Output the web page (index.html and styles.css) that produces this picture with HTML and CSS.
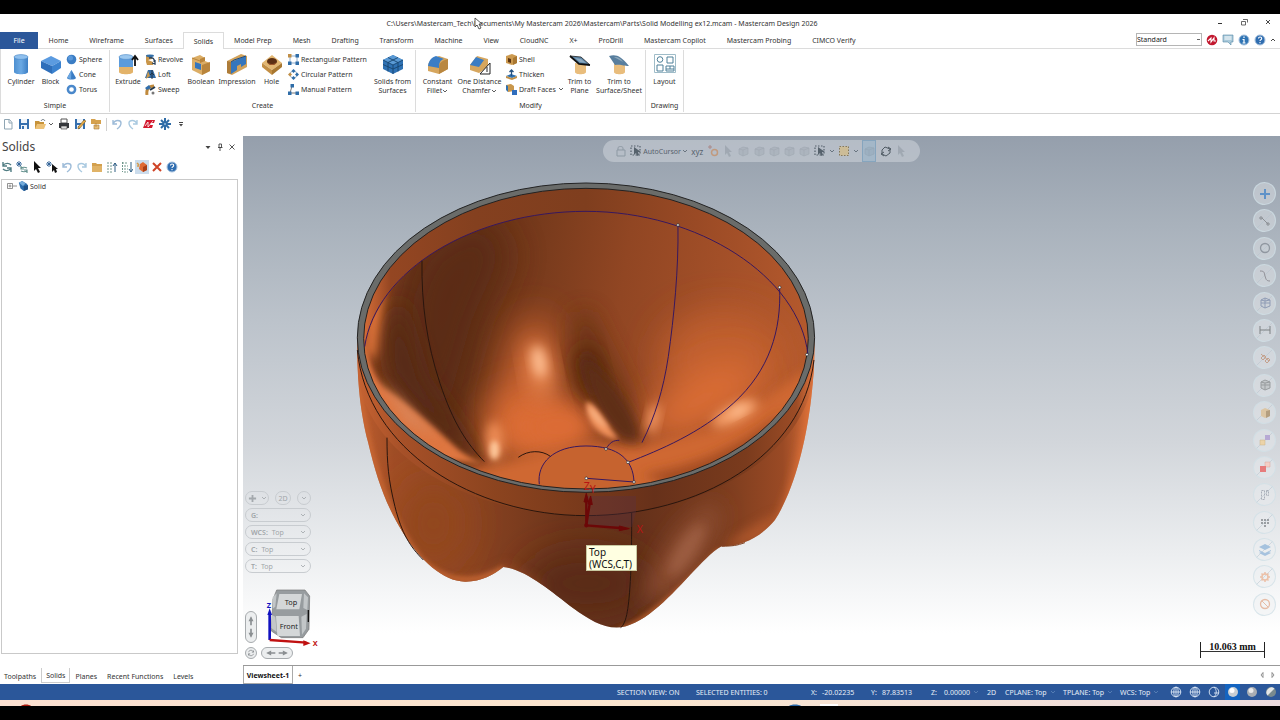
FILE: index.html
```html
<!DOCTYPE html>
<html lang="en">
<head>
<meta charset="utf-8">
<title>Mastercam Design 2026</title>
<link rel="stylesheet" href="styles.css">
</head>
<body>
<svg class="defs" width="0" height="0" aria-hidden="true">
  <defs>
    <linearGradient id="cylg"><stop offset="0" stop-color="#4d8fd0"/><stop offset=".5" stop-color="#6caae4"/><stop offset="1" stop-color="#3d7fc4"/></linearGradient>
  </defs>
  <symbol id="chev" viewBox="0 0 6 6"><path d="M1 2l2 2 2-2" fill="none" stroke="currentColor" stroke-width=".8"/></symbol>
  <symbol id="cylinder" viewBox="0 0 22 22"><path d="M4 4v15c0 3 14 3 14 0V4z" fill="url(#cylg)"/><ellipse cx="11" cy="4" rx="7" ry="2.4" fill="#8fc0ee" stroke="#4a86c5" stroke-width=".6"/></symbol>
  <symbol id="block" viewBox="0 0 22 22"><path d="M1 8l10-5 10 5-9 5z" fill="#5b9be0"/><path d="M1 8l11 5v8L1 15z" fill="#2f6fba"/><path d="M12 13l9-5v7l-9 6z" fill="#3b82cf"/></symbol>
  <symbol id="sphere" viewBox="0 0 11 11"><circle cx="5.500" cy="5.500" r="4.800" fill="#3b7dc4"/><circle cx="4.500" cy="4" r="2.500" fill="#5a98da"/></symbol>
  <symbol id="cone" viewBox="0 0 11 11"><path d="M5.500 1L10 9c-1 2-8 2-9 0z" fill="#3b7dc4"/><path d="M5.500 1L5 10 1 9z" fill="#6ba6e0"/></symbol>
  <symbol id="torus" viewBox="0 0 11 11"><circle cx="5.500" cy="5.500" r="3.600" fill="none" stroke="#4a88cb" stroke-width="2.500"/></symbol>
  <symbol id="extrude" viewBox="0 0 22 22"><path d="M2 13v6c0 3 14 3 14 0v-6z" fill="#e3b36a"/><path d="M2 4v10h14V4z" fill="#5b9bdc"/><ellipse cx="9" cy="4" rx="7" ry="2.400" fill="#9cc8ef" stroke="#4a86c5" stroke-width=".6"/><path d="M18 13V4M15 7l3-4 3 4" stroke="#111" stroke-width="1.800" fill="none"/></symbol>
  <symbol id="revolve" viewBox="0 0 11 11"><path d="M1 1h6v4L3 6l5 2v3H2L1 8z" fill="#c9964a"/><ellipse cx="5" cy="1.800" rx="4" ry="1.400" fill="#336fa8"/><path d="M4 4c4-1 6 1 5 4M7 9l3 1V6" stroke="#29415c" stroke-width="1.300" fill="none"/></symbol>
  <symbol id="loft" viewBox="0 0 11 11"><path d="M3 1h5l3 8H0z" fill="#326aa4"/><path d="M3 2l2 5-4 3z" fill="#c9984d"/><path d="M7 1v9M5 6l2-2 2 2" stroke="#203548" fill="none"/></symbol>
  <symbol id="sweep" viewBox="0 0 11 11"><path d="M2 11C1 5 4 2 9 2" fill="none" stroke="#c08a3d" stroke-width="3"/><path d="M5 6l5-3" stroke="#22374c" stroke-width="2"/><path d="M0 4l4-3 2 3-4 2z" fill="#316fae"/><circle cx="8" cy="9" r="1.500" fill="#777"/></symbol>
  <symbol id="boolean" viewBox="0 0 22 22"><path d="M2 5l8-3 5 3v3l5 2v8l-8 4-10-5z" fill="#dcae66"/><path d="M12 12l8-3v9l-8 4zM10 6l5-2v4l-5 2z" fill="#b9853c"/><path d="M5 9l6 2v6l-6-2z" fill="#3576bd"/><path d="M2 5l8 3" stroke="#b9853c"/></symbol>
  <symbol id="impression" viewBox="0 0 22 22"><path d="M1 8l14-7 6 2v11L6 22l-5-2z" fill="#d2a25a"/><path d="M5 9l15-6v8l-5 3v-3l-4 2v4l-6 4z" fill="#3576bd"/><path d="M5 9l3-2 12-4" stroke="#1f4d82" fill="none"/><path d="M1 8l4 1v12l-4-1z" fill="#ad7c39"/></symbol>
  <symbol id="hole" viewBox="0 0 22 22"><path d="M1 10l10-8 10 8-10 7z" fill="#e2b671"/><path d="M1 10l10 7v5L1 14z" fill="#c38f45"/><path d="M21 10l-10 7v5l10-8z" fill="#a87730"/><ellipse cx="11" cy="8.500" rx="5" ry="3.400" fill="#5b2f14"/><path d="M7 10c2 2 6 2 8 0" stroke="#a35a2d" fill="none"/></symbol>
  <symbol id="rectp" viewBox="0 0 11 11"><path d="M2 2h7v7H2z" fill="none" stroke="#8cabcb"/><g fill="#2f6da8"><path d="M0 0h3.500v3.500H0z" fill="#c18f47"/><path d="M7.500 0H11v3.500H7.500zM0 7.500h3.500V11H0zM7.500 7.500H11V11H7.500z"/></g></symbol>
  <symbol id="circp" viewBox="0 0 11 11"><circle cx="5.500" cy="5.500" r="3.500" fill="none" stroke="#9fb6cc"/><g fill="#2f6da8"><path d="M5.500 0l2 2-2 2-2-2zM5.500 7l2 2-2 2-2-2zM9 3.500l2 2-2 2-2-2z"/><path d="M2 3.500l2 2-2 2-2-2z" fill="#c18f47"/></g></symbol>
  <symbol id="manp" viewBox="0 0 11 11"><path d="M4 2L2 9h7" fill="none" stroke="#777"/><g fill="#2f6da8"><path d="M2.500 0H6v3.500H2.500zM7.500 7.500H11V11H7.500z"/><path d="M0 7.500h3.500V11H0z"/></g></symbol>
  <symbol id="solidsurf" viewBox="0 0 22 22"><path d="M1 7l10-5 10 5v9l-10 5-10-5z" fill="#2f72b4"/><path d="M1 7l10 5 10-5-10-5z" fill="#5a9ad5"/><path d="M1 7l10 5 10-5M11 12v9M1 11.500L11 16l10-4.500M6 4.500l10 5v9M16 4.500l-10 5v9" stroke="#17456f" fill="none" stroke-width=".9"/></symbol>
  <symbol id="fillet" viewBox="0 0 22 22"><path d="M1 13C2 6 7 5 12 3l9 3v10l-9 5-11-3z" fill="#d6a65e"/><path d="M1 13C2 6 6 4 9 3l8 3c-4 1-5 4-5 9z" fill="#3b7dc4"/><path d="M12 15c0-5 2-7 9-9v10l-9 5z" fill="#b98740"/></symbol>
  <symbol id="chamfer" viewBox="0 0 22 22"><path d="M1 12l7-9 11 3v8l-9 6-9-3z" fill="#d6a65e"/><path d="M1 12l6-8 8 3-5 7z" fill="#3b7dc4"/><path d="M11 21h10V10z" fill="#fff" stroke="#222"/><path d="M18 14v5" stroke="#222"/></symbol>
  <symbol id="shell" viewBox="0 0 11 11"><path d="M0 2l6-2 5 2v7l-5 2-6-2z" fill="#cc9a50"/><path d="M2 4l3 1v4l-3-1z" fill="#5b3412"/><path d="M7 4l4-2v7l-4 2z" fill="#a97731"/></symbol>
  <symbol id="thicken" viewBox="0 0 11 11"><path d="M0 7l5-2 6 2-5 2z" fill="#2f71b1"/><path d="M0 7v2l6 2 5-2V7L6 9z" fill="#c18f47"/><path d="M5.500 7V1M3.500 3l2-2 2 2" stroke="#225080" fill="none" stroke-width="1.300"/></symbol>
  <symbol id="draft" viewBox="0 0 11 11"><path d="M0 1l5-1 3 2v5l-6 1z" fill="#c9974c"/><path d="M0 1l2 1v6L0 6z" fill="#2f71b1"/><path d="M6 6h5v5H6z" fill="#2f6dbd"/></symbol>
  <symbol id="trimplane" viewBox="0 0 22 22"><path d="M6 10v9c0 3 11 3 11 0v-8z" fill="#e9bd7c"/><path d="M1 3l11 1 9 8-11-1z" fill="#5d87a9"/><path d="M1 3l9 8 11 1" fill="none" stroke="#111" stroke-width="1.800"/><path d="M1 3l11 1 9 8" fill="none" stroke="#222" stroke-width=".8"/><path d="M6 5l6 1 5 4-6-1z" fill="#8eabc1"/></symbol>
  <symbol id="trimsurf" viewBox="0 0 22 22"><path d="M6 10v9c0 3 11 3 11 0v-8z" fill="#e9bd7c"/><path d="M1 3c7-2 12 0 20 10-6 0-7-2-14-1z" fill="#587e9e"/><path d="M6 4c5 0 7 2 9 5z" fill="#8fa9bb"/></symbol>
  <symbol id="layout" viewBox="0 0 22 22"><g fill="#fff" stroke="#4e8099"><path d="M.500 1.500h21v18H.500z" stroke="#9fbcc8"/><circle cx="6" cy="6.500" r="2.800"/><path d="M13 4h6v6h-6zM3 12h6v6H3zM12 13h8v5h-8zM16 13v3M12 16h8"/></g></symbol>
  <symbol id="new" viewBox="0 0 12 12"><path d="M2.500 1.500h5l2.500 3v6.500H2.500zM7 1.500V5h3" fill="#fff" stroke="#8fa5b3"/></symbol>
  <symbol id="save" viewBox="0 0 12 12"><path d="M1 1h10v10H1z" fill="#356fae"/><path d="M3 1h6v4H3zM3 7h6v4H3z" fill="#eef4fa"/><path d="M4 8h2v3H4z" fill="#356fae"/></symbol>
  <symbol id="open" viewBox="0 0 12 12"><path d="M1 3h4l1 1h4v7H1z" fill="#c79339"/><path d="M3 6h9l-2 5H1z" fill="#edc277"/><path d="M7 3c1-2 3-2 4 0" stroke="#66727c" fill="none"/></symbol>
  <symbol id="print" viewBox="0 0 12 12"><path d="M3 1h6v4H3z" fill="#fff" stroke="#555"/><path d="M1 5h10v5H1z" fill="#35383c"/><path d="M3 8h6v3H3z" fill="#ddd" stroke="#333" stroke-width=".6"/></symbol>
  <symbol id="saveas" viewBox="0 0 12 12"><use href="#save"/><path d="M4 9l6-7 2 1-6 7-2 1z" fill="#e6ac49" stroke="#754e13" stroke-width=".5"/></symbol>
  <symbol id="tree" viewBox="0 0 12 12"><path d="M1 1h4l1 1h5v4H1z" fill="#d5a14d"/><path d="M4 7h5v4H4zM6 5v4" fill="#e5bd79" stroke="#a77933" stroke-width=".6"/></symbol>
  <symbol id="undo" viewBox="0 0 12 12"><path d="M2 2v4h4M2 6c2-5 8-4 8-1 0 2-1 4-4 6" fill="none" stroke="#9dbbd8" stroke-width="1.400"/></symbol>
  <symbol id="redo" viewBox="0 0 12 12"><path d="M10 2v4H6M10 6C8 1 2 2 2 5c0 2 1 4 4 6" fill="none" stroke="#a9c9e0" stroke-width="1.400"/></symbol>
  <symbol id="mclogo" viewBox="0 0 12 12"><path d="M3 2h9l-1 3H8l-1 2h3l-1 3H0l2-5z" fill="#d3192e"/><path d="M2 8l3-4v5l5-6" stroke="#fff" fill="none" stroke-width=".8"/></symbol>
  <symbol id="gear" viewBox="0 0 12 12"><circle cx="6" cy="6" r="3" fill="none" stroke="currentColor" stroke-width="1.500"/><path d="M6 1v2M6 9v2M1 6h2M9 6h2M2.500 2.500l1.500 1.500M8 8l1.500 1.500M9.500 2.500L8 4M4 8L2.500 9.500" stroke="currentColor" stroke-width="1.500"/></symbol>
  <symbol id="config" viewBox="0 0 12 12"><path d="M6 0v12M0 6h12M2 2l8 8M10 2l-8 8" stroke="#2f6ca7" stroke-width="2"/><circle cx="6" cy="6" r="1" fill="#9cc0e0"/></symbol>
  <symbol id="regen" viewBox="0 0 12 12"><path d="M2 1v4h4M2 4c3-2 6-2 8 0M10 11V7H6M10 8c-3 2-6 2-8 0" fill="none" stroke="#507d83" stroke-width="1.400"/></symbol>
  <symbol id="regenall" viewBox="0 0 12 12"><path d="M5 5v3h3M5 7c2-1 4-1 6 0M11 12V9H8M11 10c-2 1-4 1-6 0" fill="none" stroke="#66928f" stroke-width="1.200"/><path d="M3 0v6M0 3h6M1 1l4 4M5 1L1 5" stroke="#2b5f94" stroke-width=".9"/></symbol>
  <symbol id="cursor" viewBox="0 0 12 12"><path d="M3 0v10l2-2 2 4 2-1-2-4h3z" fill="currentColor"/></symbol>
  <symbol id="cursorall" viewBox="0 0 12 12"><path d="M6 3v8l2-2 1 3 2-1-1-3h2z" fill="#111"/><path d="M3 0v6M0 3h6M1 1l4 4M5 1L1 5" stroke="#2b5f94" stroke-width=".9"/></symbol>
  <symbol id="folder" viewBox="0 0 12 12"><path d="M1 2h4l1 1h5v8H1z" fill="#d3a04e"/><path d="M1 5h10v6H1z" fill="#e0b367"/></symbol>
  <symbol id="up" viewBox="0 0 12 12"><path d="M1 2h5M1 5h5M1 8h5M1 11h5" stroke="#70978c" stroke-dasharray="2 1"/><path d="M9 11V2M7 5l2-3 2 3" stroke="#2e5e84" fill="none"/></symbol>
  <symbol id="down" viewBox="0 0 12 12"><path d="M1 2h5M3 5h4M3 8h4M3 11h4M1.500 1v10" stroke="#70978c" stroke-dasharray="2 1"/><path d="M10 1v10M8 8l2 3 2-3" stroke="#2e5e84" fill="none"/></symbol>
  <symbol id="bug" viewBox="0 0 12 12"><path d="M4 3l3-2 4 3v5l-4 2-4-3z" fill="#df6a34"/><path d="M7 6l4-2v5l-4 2z" fill="#a83f17"/><path d="M1 2l2 2M1 5h2" stroke="#d69a4a" stroke-width="1.500"/></symbol>
  <symbol id="xred" viewBox="0 0 12 12"><path d="M2 2l8 8M10 2l-8 8" stroke="#cf4326" stroke-width="2"/></symbol>
  <symbol id="help" viewBox="0 0 12 12"><circle cx="6" cy="6" r="5" fill="#2f6db0" stroke="#a8c2de"/><path d="M4.500 4.500c0-2 3.200-2 3.200 0 0 1.500-1.700 1-1.700 2.500M6 8v1.200" stroke="#fff" fill="none" stroke-width="1.100"/></symbol>
  <symbol id="info" viewBox="0 0 12 12"><circle cx="6" cy="6" r="5" fill="#2f74b4" stroke="#a8c2de"/><path d="M6 2.500v1.500M4.500 5.500H6v3.500M4.500 9h3" stroke="#fff" fill="none" stroke-width="1.200"/></symbol>
  <symbol id="chat" viewBox="0 0 12 12"><path d="M1 1h10v7H9v3L6 8H1z" fill="#a9c9da" stroke="#5688a5" stroke-width=".6"/><path d="M2.500 3h7M2.500 5h7" stroke="#fff"/></symbol>
  <symbol id="red" viewBox="0 0 12 12"><circle cx="6" cy="6" r="5.300" fill="#c2182f"/><path d="M2 7l3-3v4l3-4v3h2" stroke="#fff" fill="none" stroke-width="1.100"/></symbol>
  <symbol id="solid" viewBox="0 0 12 12"><path d="M1 2l4-2 5 3 2 2v5l-5 2-4-3z" fill="#2b6cac"/><path d="M1 2l4-2 4 3-3 3z" fill="#73abdb"/><path d="M7 6l5-1v5l-5 2z" fill="#1d4f85"/></symbol>
  <symbol id="dotsel" viewBox="0 0 12 12"><path d="M1 1h9v9H1z" fill="none" stroke="currentColor" stroke-width="1.200" stroke-dasharray="1.500 1.500"/><path d="M4 2v8l2-2 1 3 2-1-1-3h3z" fill="currentColor"/></symbol>
  <symbol id="cube" viewBox="0 0 12 12"><path d="M2 4l4-2 5 1v6l-5 2-4-2z" fill="currentColor" fill-opacity=".45" stroke="currentColor" stroke-width=".7"/><path d="M2 4l4 1 5-2M6 5v6" stroke="currentColor" stroke-width=".7" fill="none"/></symbol>
  <symbol id="globe" viewBox="0 0 12 12"><g fill="none" stroke="#dde8f6" stroke-width=".9"><circle cx="6" cy="6" r="4.800"/><ellipse cx="6" cy="6" rx="2.200" ry="4.800"/><path d="M1 6h10M6 1v10"/></g></symbol>
</svg>

<div class="app">
  <div class="letterbox"></div>
  <header class="titlebar">
    <h1>C:\Users\Mastercam_Tech\Documents\My Mastercam 2026\Mastercam\Parts\Solid Modelling ex12.mcam - Mastercam Design 2026</h1>
    <svg class="pointer" viewBox="0 0 9 13" aria-hidden="true"><path d="M1 1v9l2-2 2 4 2-1-2-4h3z" fill="#fff" stroke="#333" stroke-width=".8"/></svg>
    <div class="winctl">
      <button aria-label="Minimize"><svg viewBox="0 0 8 8"><path d="M2 5.500h4" stroke="#333"/></svg></button>
      <button aria-label="Restore"><svg viewBox="0 0 8 8"><path d="M3 1.500h4.500v3M1.500 3.500h4v3.500h-4z" fill="none" stroke="#444" stroke-width=".8"/></svg></button>
      <button aria-label="Close"><svg viewBox="0 0 8 8"><path d="M2 2l4 4M6 2L2 6" stroke="#333" stroke-width=".9"/></svg></button>
    </div>
  </header>

  <nav class="tabs">
    <div class="tablist">
      <button class="file">File</button><button>Home</button><button>Wireframe</button><button>Surfaces</button><button class="on">Solids</button><button>Model Prep</button><button>Mesh</button><button>Drafting</button><button>Transform</button><button>Machine</button><button>View</button><button>CloudNC</button><button>X+</button><button>ProDrill</button><button>Mastercam Copilot</button><button>Mastercam Probing</button><button>CIMCO Verify</button>
    </div>
    <div class="tabtools">
      <select aria-label="Selection mode"><option>Standard</option></select>
      <button aria-label="Mastercam"><svg><use href="#red"/></svg></button>
      <button aria-label="Feedback"><svg><use href="#chat"/></svg></button>
      <button aria-label="Info"><svg><use href="#info"/></svg></button>
      <button aria-label="Help"><svg><use href="#help"/></svg></button>
      <button class="fold" aria-label="Collapse ribbon"><svg viewBox="0 0 6 6"><path d="M1 4l2-2 2 2" fill="none" stroke="#444"/></svg></button>
    </div>
  </nav>

  <section class="ribbon">
    <div class="group simple">
      <div class="tools">
        <button class="big"><svg><use href="#cylinder"/></svg>Cylinder</button>
        <button class="big"><svg><use href="#block"/></svg>Block</button>
        <div class="stack">
          <button><svg><use href="#sphere"/></svg>Sphere</button>
          <button><svg><use href="#cone"/></svg>Cone</button>
          <button><svg><use href="#torus"/></svg>Torus</button>
        </div>
      </div>
      <h2>Simple</h2>
    </div>
    <div class="group create">
      <div class="tools">
        <button class="big"><svg><use href="#extrude"/></svg>Extrude</button>
        <div class="stack">
          <button><svg><use href="#revolve"/></svg>Revolve</button>
          <button><svg><use href="#loft"/></svg>Loft</button>
          <button><svg><use href="#sweep"/></svg>Sweep</button>
        </div>
        <button class="big"><svg><use href="#boolean"/></svg>Boolean</button>
        <button class="big"><svg><use href="#impression"/></svg>Impression</button>
        <button class="big"><svg><use href="#hole"/></svg>Hole</button>
        <div class="stack">
          <button><svg><use href="#rectp"/></svg>Rectangular Pattern</button>
          <button><svg><use href="#circp"/></svg>Circular Pattern</button>
          <button><svg><use href="#manp"/></svg>Manual Pattern</button>
        </div>
        <button class="big"><svg><use href="#solidsurf"/></svg>Solids from<br>Surfaces</button>
      </div>
      <h2>Create</h2>
    </div>
    <div class="group modify">
      <div class="tools">
        <button class="big"><svg><use href="#fillet"/></svg>Constant<span>Fillet<svg class="c"><use href="#chev"/></svg></span></button>
        <button class="big"><svg><use href="#chamfer"/></svg>One Distance<span>Chamfer<svg class="c"><use href="#chev"/></svg></span></button>
        <div class="stack">
          <button><svg><use href="#shell"/></svg>Shell</button>
          <button><svg><use href="#thicken"/></svg>Thicken</button>
          <button><svg><use href="#draft"/></svg>Draft Faces<svg class="c"><use href="#chev"/></svg></button>
        </div>
        <button class="big"><svg><use href="#trimplane"/></svg>Trim to<br>Plane</button>
        <button class="big"><svg><use href="#trimsurf"/></svg>Trim to<br>Surface/Sheet</button>
      </div>
      <h2>Modify</h2>
    </div>
    <div class="group drawing">
      <div class="tools"><button class="big"><svg><use href="#layout"/></svg>Layout</button></div>
      <h2>Drawing</h2>
    </div>
  </section>

  <div class="quick">
    <button aria-label="New"><svg><use href="#new"/></svg></button>
    <button aria-label="Save"><svg><use href="#save"/></svg></button>
    <button aria-label="Open"><svg><use href="#open"/></svg></button>
    <button class="thin" aria-label="Open options"><svg><use href="#chev"/></svg></button>
    <button aria-label="Print"><svg><use href="#print"/></svg></button>
    <button aria-label="Save as"><svg><use href="#saveas"/></svg></button>
    <button aria-label="Zip2Go"><svg><use href="#tree"/></svg></button>
    <i></i>
    <button aria-label="Undo"><svg><use href="#undo"/></svg></button>
    <button aria-label="Redo"><svg><use href="#redo"/></svg></button>
    <button aria-label="Mastercam link"><svg><use href="#mclogo"/></svg></button>
    <button aria-label="Configuration"><svg><use href="#config"/></svg></button>
    <button aria-label="Customize toolbar"><svg viewBox="0 0 12 12"><path d="M4 4.500h4" stroke="#444"/><path d="M4 6h4L6 8.500z" fill="#444"/></svg></button>
  </div>

  <main>
    <aside class="panel">
      <header>
        <h2>Solids</h2>
        <button aria-label="Panel menu"><svg viewBox="0 0 8 8"><path d="M1.500 3h5L4 6z" fill="#444"/></svg></button>
        <button aria-label="Pin"><svg viewBox="0 0 8 8"><path d="M3 1h2.500v3.500H3zM2 4.500h4.500M4 5v3" fill="none" stroke="#444" stroke-width=".9"/></svg></button>
        <button aria-label="Close panel"><svg viewBox="0 0 8 8"><path d="M1.500 1.500l5 5M6.500 1.500l-5 5" stroke="#444" stroke-width=".9"/></svg></button>
      </header>
      <div class="ptools">
        <button aria-label="Regenerate"><svg><use href="#regen"/></svg></button>
        <button aria-label="Regenerate all"><svg><use href="#regenall"/></svg></button>
        <button aria-label="Select"><svg><use href="#cursor"/></svg></button>
        <button aria-label="Select all"><svg><use href="#cursorall"/></svg></button>
        <button aria-label="Undo"><svg><use href="#undo"/></svg></button>
        <button aria-label="Redo"><svg><use href="#redo"/></svg></button>
        <button aria-label="Group"><svg><use href="#folder"/></svg></button>
        <button aria-label="Collapse"><svg><use href="#up"/></svg></button>
        <button aria-label="Expand"><svg><use href="#down"/></svg></button>
        <button class="on" aria-label="Auto-highlight"><svg><use href="#bug"/></svg></button>
        <button aria-label="Delete"><svg><use href="#xred"/></svg></button>
        <button aria-label="Help"><svg><use href="#help"/></svg></button>
      </div>
      <div class="treebox">
        <div class="node"><svg class="plus" viewBox="0 0 10 8"><path d="M.500 1.500h5v5h-5zM3 2.500v3M1.500 4h3M6 4h4" fill="none" stroke="#777" stroke-width=".8"/></svg><svg class="sicon"><use href="#solid"/></svg>Solid</div>
      </div>
      <nav class="ptabs"><button>Toolpaths</button><button class="on">Solids</button><button>Planes</button><button>Recent Functions</button><button>Levels</button></nav>
    </aside>

    <section class="work">
      <div class="view">
        <svg class="scene" viewBox="243 136 1037 529" preserveAspectRatio="xMinYMin meet" role="img" aria-label="Bowl model">
          <defs>
            <filter id="b8" x="-50%" y="-50%" width="200%" height="200%"><feGaussianBlur stdDeviation="8"/></filter>
            <filter id="b15" x="-50%" y="-50%" width="200%" height="200%"><feGaussianBlur stdDeviation="16"/></filter>
            <filter id="b30" x="-50%" y="-50%" width="200%" height="200%"><feGaussianBlur stdDeviation="32"/></filter>
            <filter id="b50" x="-60%" y="-60%" width="220%" height="220%"><feGaussianBlur stdDeviation="52"/></filter>
            <linearGradient id="inner" gradientUnits="userSpaceOnUse" x1="72" y1="520" x2="1405" y2="720"><stop offset="0" stop-color="#8a431f"/><stop offset=".08" stop-color="#6b3418"/><stop offset=".22" stop-color="#683317"/><stop offset=".38" stop-color="#7b3c1d"/><stop offset=".55" stop-color="#914623"/><stop offset=".8" stop-color="#a65129"/><stop offset="1" stop-color="#b4592c"/></linearGradient>
            <linearGradient id="wall" gradientUnits="userSpaceOnUse" x1="72" y1="0" x2="1405" y2="0"><stop offset="0" stop-color="#d46c38"/><stop offset=".06" stop-color="#944622"/><stop offset=".25" stop-color="#84401f"/><stop offset=".5" stop-color="#7f3e1e"/><stop offset=".75" stop-color="#9a4a25"/><stop offset="1" stop-color="#b4592d"/></linearGradient>
            <linearGradient id="body" gradientUnits="userSpaceOnUse" x1="51" y1="0" x2="1424" y2="0"><stop offset="0" stop-color="#c05f30"/><stop offset=".08" stop-color="#a04d25"/><stop offset=".25" stop-color="#8b4321"/><stop offset=".45" stop-color="#6d351b"/><stop offset=".6" stop-color="#63301a"/><stop offset=".8" stop-color="#7b3c1e"/><stop offset=".93" stop-color="#9a4a25"/><stop offset="1" stop-color="#d66d38"/></linearGradient>
            <linearGradient id="band" gradientUnits="userSpaceOnUse" x1="51" y1="0" x2="1424" y2="0"><stop offset="0" stop-color="#c66332"/><stop offset=".1" stop-color="#a65028"/><stop offset=".3" stop-color="#8c441f"/><stop offset=".5" stop-color="#78391b"/><stop offset=".65" stop-color="#67311a"/><stop offset=".85" stop-color="#7a3b1d"/><stop offset=".96" stop-color="#9c4c26"/><stop offset="1" stop-color="#e07640"/></linearGradient>
            <path id="hull" d="M51 500C51 640 62 730 84 816 110 925 135 1000 190 1090 240 1170 310 1235 375 1235 420 1236 462 1215 490 1191 560 1200 630 1262 700 1315 745 1347 785 1373 830 1373 905 1370 980 1290 1050 1215 1085 1180 1115 1145 1145 1129 1200 1130 1260 1105 1305 1050 1360 965 1395 830 1412 700 1420 640 1425 560 1424 500z"/>
            <clipPath id="hullc"><use href="#hull"/></clipPath>
            <clipPath id="inc"><ellipse cx="738" cy="506" rx="667" ry="451"/></clipPath>
            <clipPath id="bluec"><ellipse cx="738" cy="581" rx="667" ry="457"/></clipPath>
            <clipPath id="bandc"><ellipse cx="738" cy="581" rx="686" ry="456"/></clipPath>
          </defs>
          <g transform="translate(340 170) scale(.3333)">
            <use href="#hull" fill="url(#body)"/>
            <g clip-path="url(#hullc)">
              <ellipse cx="740" cy="1240" rx="190" ry="100" fill="#5a2b17" filter="url(#b50)"/>
              <ellipse cx="280" cy="1060" rx="100" ry="130" fill="#92471f" filter="url(#b50)"/>
              <path d="M300 1235C380 1225 440 1220 500 1180L620 1250 480 1290 300 1270z" fill="#a8522a" opacity=".5" filter="url(#b15)"/>
              <path d="M900 1300C950 1170 1020 1040 1120 1000 1180 1010 1100 1160 1000 1260z" fill="#8c4d30" filter="url(#b30)"/>
              <ellipse cx="1040" cy="1140" rx="28" ry="90" fill="#a8694d" opacity=".6" transform="rotate(33 1040 1140)" filter="url(#b15)"/>
              <path d="M1440 540C1420 900 1370 1040 1290 1090 1350 1000 1390 860 1412 640z" fill="#e9773b" filter="url(#b15)"/>
              <path d="M1150 1140C1190 1085 1260 1060 1310 1030L1280 1110z" fill="#d06a35" opacity=".5" filter="url(#b15)"/>
              <path d="M840 1380C930 1350 1040 1240 1140 1140" fill="none" stroke="#c4642f" stroke-width="12" filter="url(#b8)"/>
              <path d="M55 620C75 850 150 1050 240 1165 310 1235 400 1250 490 1195" fill="none" stroke="#cf6c36" stroke-width="12" filter="url(#b8)"/>
              <g clip-path="url(#bandc)"><path d="M0 400h1470v700H0z" fill="url(#band)"/></g>
            </g>
            <g fill="none" stroke="#29150d" stroke-width="3">
              <path d="M52 540C80 840 400 1037 738 1037S1390 860 1422 570"/>
              <path d="M141 803C141 880 145 930 165 1010S210 1130 250 1170"/>
              <path d="M875 1028C876 1180 870 1280 862 1325 858 1350 850 1368 842 1373"/>
              <path d="M1145 1129C1180 1128 1190 1127 1215 1118" stroke="#81401f"/>
            </g>
            <ellipse cx="738" cy="503" rx="686" ry="464" fill="#6a6c6a" stroke="#222" stroke-width="3"/>
            <g clip-path="url(#inc)">
              <path d="M50 30h1380v960H50z" fill="url(#wall)"/>
              <g clip-path="url(#bluec)">
                <path d="M50 100h1380v900H50z" fill="url(#inner)"/>
                <path d="M240 240L430 120 520 250 430 450 360 700 400 860 300 760 200 650 180 400z" fill="#592a12" opacity=".8" filter="url(#b50)"/>
                <ellipse cx="1150" cy="570" rx="190" ry="150" fill="#c05e2e" filter="url(#b50)"/>
                <ellipse cx="1080" cy="690" rx="190" ry="75" fill="#db6d36" transform="rotate(-30 1080 690)" filter="url(#b50)"/>
                <ellipse cx="560" cy="620" rx="75" ry="190" fill="#c5612f" transform="rotate(12 560 620)" filter="url(#b50)"/>
                <ellipse cx="560" cy="770" rx="130" ry="110" fill="#dd6d35" filter="url(#b50)"/>
                <ellipse cx="650" cy="770" rx="110" ry="75" fill="#dc6c36" filter="url(#b30)"/>
                <path d="M300 900L480 880 740 820 900 830 1150 770 1400 600 1420 1000H300z" fill="#cf6731" filter="url(#b15)"/>
                <path d="M700 430C690 520 705 590 720 660L810 740 890 760 860 640C820 560 780 480 750 420z" fill="#6b3417" opacity=".8" filter="url(#b30)"/>
                <ellipse cx="752" cy="610" rx="34" ry="85" fill="#4d240e" transform="rotate(-14 752 610)" filter="url(#b30)"/>
                <path d="M725 560C745 690 800 770 850 812L900 816C905 780 880 730 845 680 810 630 770 590 725 560z" fill="#5e2d14" filter="url(#b15)"/>
                <path d="M738 695C765 695 800 760 835 808 790 805 735 765 738 695z" fill="#f0905a" filter="url(#b8)"/>
                <path d="M745 708C765 715 780 745 805 775 775 765 750 735 745 708z" fill="#f7b283" filter="url(#b8)"/>
                <ellipse cx="940" cy="745" rx="16" ry="46" fill="#f59b67" transform="rotate(12 940 745)" filter="url(#b15)"/>
                <ellipse cx="1185" cy="730" rx="75" ry="26" fill="#f6a06b" transform="rotate(-27 1185 730)" filter="url(#b15)"/>
                <ellipse cx="1195" cy="722" rx="30" ry="12" fill="#ffc397" transform="rotate(-27 1195 722)" filter="url(#b15)"/>
                <path d="M905 915C1050 890 1200 840 1330 720L1250 860 1000 950z" fill="#a24b21" filter="url(#b15)"/>
                <ellipse cx="600" cy="600" rx="36" ry="85" fill="#ee8a52" transform="rotate(-10 600 600)" filter="url(#b30)"/>
                <ellipse cx="597" cy="575" rx="20" ry="48" fill="#ffc195" transform="rotate(-10 597 575)" filter="url(#b15)"/>
                <ellipse cx="463" cy="815" rx="26" ry="60" fill="#f08e56" filter="url(#b15)"/>
                <ellipse cx="463" cy="840" rx="14" ry="28" fill="#ffc79a" filter="url(#b8)"/>
                <path d="M150 610C125 500 150 420 180 390L250 620 420 870C350 860 230 730 150 610z" fill="#572a12" filter="url(#b30)"/>
                <path d="M60 480C85 560 95 610 130 650 200 700 270 760 330 815 360 845 390 865 430 880L300 870 60 680z" fill="#de763f" filter="url(#b8)"/>
                <path d="M110 620C150 660 200 690 235 745L300 810 200 760z" fill="#d78a62" opacity=".7" filter="url(#b15)"/>
                <path d="M80 430C90 380 110 340 140 300L105 560 75 560z" fill="#e8793e" filter="url(#b15)"/>
                <path d="M596 980V930C600 870 650 828 738 828S876 870 882 930v50z" fill="#c6632f"/>
              </g>
            </g>
            <ellipse cx="738" cy="506" rx="667" ry="451" fill="none" stroke="#222" stroke-width="3"/>
            <g fill="none" stroke="#37175e" stroke-width="3">
              <path d="M74 530C108 300 400 124 738 124S1378 320 1404 554"/>
              <path d="M1014 165C1016 300 1002 440 985 560 970 660 945 740 906 818"/>
              <path d="M1319 352C1324 480 1290 600 1180 700 1080 790 960 840 865 877"/>
              <path d="M598 943C590 880 640 828 738 828S880 870 882 936M739 925l143 11M798 837c12-20 22-26 40-26"/>
            </g>
            <g fill="none" stroke="#29150d" stroke-width="3"><path d="M246 272C244 400 260 520 300 640S380 820 433 875M535 862c30-22 70-22 96-3"/></g>
            <path d="M738 978h150v48l-12 45-140-4z" fill="#593045" opacity=".35"/>
            <g fill="#fff" stroke="#222" stroke-width="2"><circle cx="1014" cy="165" r="4"/><circle cx="1319" cy="352" r="4"/><circle cx="1401" cy="554" r="4"/><circle cx="798" cy="837" r="4"/><circle cx="864" cy="877" r="4"/><circle cx="882" cy="936" r="4"/><circle cx="739" cy="925" r="4"/></g>
            <g fill="#6c0707" stroke="#6c0707" stroke-width="7"><path d="M739 1066V990M739 1066l11-70M739 1066l100 8" fill="none"/><path d="M739 970l7 26h-14zM752 978l5 26-13-2zM868 1076l-30 6v-14z" stroke-width="3"/><circle cx="739" cy="1066" r="3"/></g>
            <g class="axis"><text x="731" y="960">Z</text><text x="749" y="970">Y</text><text x="890" y="1090">X</text></g>
          </g>
          <g transform="translate(240 480) scale(.3333)">
            <path d="M110 330h85l14 18-2 100-18 25h-65l-30-20 5-95z" fill="#979c9f" stroke="#777" stroke-width="2"/>
            <path d="M118 342h68l-8 46h-69zM108 408h68l4 60h-68z" fill="#d4d7d8"/>
            <path d="M98 352l12-12-4 40-8 6zM192 340l12 12-2 38-12-6zM96 405l10 5 4 46-16-12zM184 410l16-8-2 44-12 18z" fill="#c2c6c8"/>
            <path d="M205 390v36" stroke="#111" stroke-width="4"/>
            <path d="M89 480v-80" stroke="#1111c0" stroke-width="8"/><path d="M89 385l7 20H82z" fill="#1111c0"/>
            <path d="M89 480l110 8" stroke="#c01111" stroke-width="7"/><path d="M212 490l-22 8v-17z" fill="#c01111"/>
            <g class="cubetext"><text x="134" y="375">Top</text><text x="119" y="446">Front</text><text x="80" y="385" class="z">Z</text><text x="218" y="499" class="x">X</text></g>
          </g>
        </svg>

        <div class="selbar">
          <button class="lock" aria-label="Lock"><svg viewBox="0 0 12 12"><path d="M3 5V3c0-2 5-2 5 0v2M2 5h8v6H2z" fill="none" stroke="#8d99a3"/></svg></button>
          <button class="auto"><svg><use href="#dotsel"/></svg>AutoCursor<svg class="c"><use href="#chev"/></svg></button>
          <button class="xyz">xyz</button>
          <button class="or" aria-label="Snap options"><svg viewBox="0 0 12 12"><circle cx="7.500" cy="7.500" r="3" fill="none" stroke="#c19a7e" stroke-width="1.500"/><path d="M1 2h4M3 0v4" stroke="#a88"/></svg></button>
          <button class="dim" aria-label="Select"><svg><use href="#cursor"/></svg></button>
          <button class="dim" aria-label="Select edge"><svg><use href="#cube"/></svg></button>
          <button class="dim" aria-label="Select face"><svg><use href="#cube"/></svg></button>
          <button class="dim" aria-label="Select body"><svg><use href="#cube"/></svg></button>
          <button class="dim" aria-label="Select back"><svg><use href="#cube"/></svg></button>
          <button class="dim" aria-label="Select sphere"><svg><use href="#cube"/></svg></button>
          <button class="pick" aria-label="Selection method"><svg><use href="#dotsel"/></svg><svg class="c"><use href="#chev"/></svg></button>
          <button class="pick" aria-label="Window mode"><svg viewBox="0 0 12 12"><path d="M1.500 1.500h9v9h-9z" fill="#ccbc97" stroke="#85785c" stroke-dasharray="1.500 1.500"/></svg><svg class="c"><use href="#chev"/></svg></button>
          <button class="hot" aria-label="Verify selection"><svg><use href="#cube"/></svg></button>
          <button aria-label="Invert selection"><svg viewBox="0 0 12 12"><path d="M2 5l3-3 5 2v4L6 11 2 9zM8 2l3 2-3 2M4 11l-3-2 3-2" fill="none" stroke="#4f5a63"/></svg></button>
          <button class="dim" aria-label="Last selection"><svg><use href="#cursor"/></svg></button>
        </div>

        <div class="rail">
          <button aria-label="Add"><svg viewBox="0 0 12 12"><path d="M6 1v10M1 6h10" stroke="#5f92c8" stroke-width="2"/></svg></button>
          <button class="s" aria-label="Points"><svg viewBox="0 0 12 12"><path d="M2 1v4M0 3h4M3 3l6 6M7 9h4M9 7v4" stroke="#8b8f94" fill="none"/></svg></button>
          <button class="s" aria-label="Arcs"><svg viewBox="0 0 12 12"><circle cx="6" cy="6" r="4.500" stroke="#9097a0" stroke-width="1.300" fill="none"/></svg></button>
          <button class="s" aria-label="Splines"><svg viewBox="0 0 12 12"><path d="M1 1c5 0 4 2 5 5s1 5 5 5" stroke="#8f8f96" fill="none"/></svg></button>
          <button class="s" aria-label="Surfaces"><svg viewBox="0 0 12 12"><path d="M2 3l4-2 5 2v6l-5 2-4-2zM2 6l9 0M6 1v10M2 3l4 1 5-1" stroke="#8f9cb5" fill="none"/></svg></button>
          <button class="s" aria-label="Dimensions"><svg viewBox="0 0 12 12"><path d="M1 2v8M11 2v8M1 6h10" stroke="#7d8183" fill="none"/></svg></button>
          <button class="s" aria-label="Wireframe"><svg viewBox="0 0 12 12"><path d="M2 2l8 7M2 6l3-3 2 2-3 3zM6 9l3-3 2 2-3 3z" stroke="#c3a18c" fill="none"/></svg></button>
          <button class="s" aria-label="Mesh"><svg viewBox="0 0 12 12"><path d="M2 3l4-2 5 2v6l-5 2-4-2z" fill="#c4c8ca"/><path d="M2 3l4-2 5 2v6l-5 2-4-2zM2 6l9 0M6 4v7M2 3l4 1 5-1" stroke="#999d9f" fill="none"/></svg></button>
          <button class="s" aria-label="Solids"><svg viewBox="0 0 12 12"><path d="M2 3l4-2 5 2v6l-5 2-4-2z" fill="#dcc6a4"/><path d="M7 4l4-1v6l-4 2z" fill="#b49f80"/></svg></button>
          <button class="s" aria-label="Colors"><svg viewBox="0 0 12 12"><path d="M6 1h5v5H6z" fill="#b7a9d4"/><path d="M1 6h5v5H1z" fill="#ecd3a8" stroke="#c9b288" stroke-width=".5"/></svg></button>
          <button class="s" aria-label="Result"><svg viewBox="0 0 12 12"><path d="M6 1h5v5H6z" fill="#f4cfc6" stroke="#daa79c" stroke-width=".5"/><path d="M1 5h6v6H1z" fill="#e67c7c"/></svg></button>
          <button class="s" aria-label="Groups"><svg viewBox="0 0 12 12"><path d="M2.500 1.500h3v9h-3zM7.500 1.500h2v5h-2z" stroke="#a9aeb8" fill="none" stroke-dasharray="2 1"/></svg></button>
          <button class="s" aria-label="Named items"><svg viewBox="0 0 12 12"><path d="M2 4h8M2 7h8M5 10h3" stroke="#83868a" stroke-width="1.500" stroke-dasharray="2 1"/></svg></button>
          <button class="s" aria-label="Levels"><svg viewBox="0 0 12 12"><path d="M6 0l6 3-6 3-6-3zM0 6l6 3 6-3v1l-6 3-6-3zM0 9l6 3 6-3-2-1-4 2-4-2z" fill="#a6c2de"/></svg></button>
          <button class="s og" aria-label="Settings"><svg><use href="#gear"/></svg></button>
          <button aria-label="Clear"><svg viewBox="0 0 12 12"><circle cx="6" cy="6" r="4.500" stroke="#e6bca6" fill="none" stroke-width="1.300"/><path d="M3 3l6 6" stroke="#e6bca6"/></svg></button>
        </div>

        <div class="planes">
          <div><button class="add" aria-label="Add plane"><svg viewBox="0 0 10 10"><path d="M5 1v8M1 5h8" stroke="#a4a9ad" stroke-width="2"/></svg><svg class="c"><use href="#chev"/></svg></button><button class="two">2D</button><button class="more" aria-label="More"><svg class="c"><use href="#chev"/></svg></button></div>
          <button class="pl"><b>G:</b><svg class="c"><use href="#chev"/></svg></button>
          <button class="pl"><b>WCS:</b>Top<svg class="c"><use href="#chev"/></svg></button>
          <button class="pl"><b>C:</b>Top<svg class="c"><use href="#chev"/></svg></button>
          <button class="pl"><b>T:</b>Top<svg class="c"><use href="#chev"/></svg></button>
        </div>
        <div class="spin">
          <button class="v" aria-label="Rotate vertically"><svg viewBox="0 0 12 32"><path d="M6 5v9M6 27v-9" stroke="#8b8f92" stroke-width="2"/><path d="M6 3l3 6H3zM6 29l3-6H3z" fill="#8b8f92"/></svg></button>
          <button class="r" aria-label="Spin"><svg viewBox="0 0 12 12"><path d="M3 5c1-3 5-3 6 0M9 3v2H7M9 7c-1 3-5 3-6 0M3 9V7h2" stroke="#888c8f" fill="none"/></svg></button>
          <button class="h" aria-label="Rotate horizontally"><svg viewBox="0 0 32 12"><path d="M5 6h9M27 6h-9" stroke="#8b8f92" stroke-width="2"/><path d="M3 6l6 3V3zM29 6l-6 3V3z" fill="#8b8f92"/></svg></button>
        </div>
        <div class="tip">Top<br>(WCS,C,T)</div>
        <div class="scale">10.063 mm</div>
      </div>
      <nav class="sheets"><button class="on">Viewsheet-1</button><button class="plusb">+</button><span></span><button aria-label="Previous sheet"><svg viewBox="0 0 8 8"><path d="M5 1.500v5L3 4z" fill="none" stroke="#666" stroke-width=".7"/></svg></button><button aria-label="Next sheet"><svg viewBox="0 0 8 8"><path d="M3 1.500v5L5 4z" fill="none" stroke="#666" stroke-width=".7"/></svg></button></nav>
    </section>
  </main>

  <footer class="status">
    <div class="cell sec">SECTION VIEW: ON</div>
    <div class="cell sel">SELECTED ENTITIES: 0</div>
    <div class="cell num"><span>X:</span>-20.02235</div>
    <div class="cell num"><span>Y:</span>87.83513</div>
    <div class="cell zed"><span>Z:</span>0.00000<svg class="c"><use href="#chev"/></svg></div>
    <button class="cell d2">2D</button>
    <button class="cell cp">CPLANE: Top<svg class="c"><use href="#chev"/></svg></button>
    <button class="cell tp">TPLANE: Top<svg class="c"><use href="#chev"/></svg></button>
    <button class="cell wc">WCS: Top<svg class="c"><use href="#chev"/></svg></button>
    <div class="modes">
      <button aria-label="Wireframe"><svg><use href="#globe"/></svg></button>
      <button aria-label="Dimmed wireframe"><svg><use href="#globe"/></svg></button>
      <button aria-label="Hidden removed"><svg viewBox="0 0 12 12"><g fill="none" stroke="#dde8f6" stroke-width=".9"><circle cx="6" cy="6" r="4.800"/><path d="M6 1c3 3 3 7 0 10M6 7h5"/></g></svg></button>
      <button class="on" aria-label="Outline shaded"><svg viewBox="0 0 12 12"><circle cx="6" cy="6" r="5" fill="#c8cfd4"/><circle cx="5" cy="4.500" r="2.500" fill="#fff"/></svg></button>
      <button aria-label="Shaded"><svg viewBox="0 0 12 12"><circle cx="6" cy="6" r="5" fill="#a9adb3"/><circle cx="5" cy="4.500" r="2.500" fill="#e9e9ea"/></svg></button>
      <button aria-label="Translucent"><svg viewBox="0 0 12 12"><circle cx="6" cy="6" r="5" fill="#788a8f"/><path d="M9.500 2.500A5 5 0 0 0 2.500 9.500z" fill="#e3e6e6"/></svg></button>
    </div>
  </footer>
  <div class="taskbar"><svg viewBox="0 0 1280 6" preserveAspectRatio="xMinYMin meet" aria-hidden="true"><path d="M21 6c2-2 8-2 10 0z" fill="#a8180c"/><path d="M789 6c2-2 10-2 12 0z" fill="#2866a6"/><path d="M820 4h18v2h-18z" fill="#fff"/></svg></div>
  <div class="letterbox"></div>
</div>
</body>
</html>
```

FILE: styles.css
```css
* { box-sizing: border-box; }
body { margin: 0; background: #000; font: 7px/9px "Noto Sans", "Open Sans", sans-serif; color: #333; }
button { margin: 0; padding: 0; border: 0; background: none; font: inherit; color: inherit; display: flex; align-items: center; white-space: nowrap; }
h1, h2 { margin: 0; font: inherit; }
svg { display: block; flex: none; }
svg.c { width: 6px; height: 6px; }
.defs { position: absolute; }

.app { min-height: 100vh; display: flex; flex-direction: column; background: #fff; }
.letterbox { background: #000; height: 14px; }

.titlebar { height: 18px; display: grid; grid-template-columns: 1fr auto 1fr; align-items: center; position: relative; }
.titlebar h1 { grid-column: 2; margin-right: 76px; }
.titlebar .pointer { position: absolute; left: 474px; top: 3px; width: 9px; height: 13px; }
.winctl { position: absolute; right: 8px; top: 4px; display: flex; gap: 16px; }
.winctl svg { width: 8px; height: 8px; }

.tabs { height: 17px; display: flex; border-bottom: 1px solid #dcdcdc; }
.tablist { display: flex; width: 866px; height: 17px; }
.tablist button { flex: 1 0 auto; padding: 0 10px; justify-content: center; }
.tablist .file { flex: 0 0 38px; background: #2b579a; color: #fff; }
.tablist .on { background: #fff; border: 1px solid #dcdcdc; border-bottom: 0; padding: 0 9px; }
.tabtools { margin-left: auto; display: flex; align-items: center; gap: 4px; padding-right: 4px; height: 15px; }
.tabtools svg { width: 12px; height: 12px; }
.tabtools .fold svg { width: 6px; height: 6px; }
.tabtools select { width: 66px; height: 13px; padding: 0; font: inherit; color: #222; border: 1px solid #b5b5b5; border-radius: 0; appearance: none; background: linear-gradient(#666, #666) 60px 5px / 3px 1px no-repeat #fff; }

.ribbon { height: 65px; display: flex; border-bottom: 1px solid #d3d3d3; border-left: 1px solid #dcdcdc; }
.group { display: flex; flex-direction: column; border-right: 1px solid #dcdcdc; margin: 1px 0; }
.group h2 { text-align: center; margin-top: auto; padding-bottom: 2px; }
.tools { display: grid; padding-top: 3px; }
.simple .tools { padding-left: 4px; grid-template-columns: 32px 27px 45px; }
.create .tools { padding-left: 3px; grid-template-columns: 30px 42px 32px 40px 29px 84px 45px; }
.modify .tools { padding-left: 4px; grid-template-columns: 35px 49px 62px 27px 52px; }
.drawing .tools { grid-template-columns: 37px; }
.big { flex-direction: column; text-align: center; line-height: 9px; align-self: start; }
.big > svg { width: 22px; height: 22px; margin-bottom: 2px; }
.big span { display: flex; align-items: center; }
.stack { display: flex; flex-direction: column; gap: 3px; padding: 0 0 0 2px; }
.stack button { gap: 2px; height: 12px; }
.stack svg:first-child { width: 11px; height: 11px; }

.quick { height: 22px; display: flex; align-items: center; gap: 4px; padding: 0 0 2px 2px; }
.quick svg { width: 12px; height: 12px; }
.quick .thin svg { width: 6px; height: 6px; }
.quick .thin { margin: 0 0 0 -2px; }
.quick i { width: 1px; height: 13px; background: #d0d0d0; }

main { flex: 1; display: flex; min-height: 0; }
.panel { width: 243px; flex: none; display: flex; flex-direction: column; }
.panel header { height: 22px; display: flex; align-items: center; gap: 4px; padding: 0 7px 0 2px; }
.panel h2 { font-size: 12px; line-height: 16px; margin-right: auto; color: #444; }
.panel header svg { width: 8px; height: 8px; }
.ptools { height: 18px; display: flex; align-items: center; gap: 1px; color: #111; }
.ptools button { width: 14px; height: 14px; justify-content: center; }
.ptools svg { width: 12px; height: 12px; }
.ptools .on { background: #cbdcec; }
.treebox { flex: 1; margin: 3px 5px 0 1px; border: 1px solid #c9c9c9; padding: 1px 5px; }
.node { display: flex; align-items: center; gap: 1px; }
.plus { width: 10px; height: 8px; }
.sicon { width: 10px; height: 10px; margin-right: 1px; }
.ptabs { height: 30px; padding-top: 14px; display: flex; }
.ptabs button { padding: 0 5px; }
.ptabs button:first-child { padding: 0 5px 0 4px; }
.ptabs .on { border: 1px solid #ccc; border-top: 0; padding: 0 4px; height: 15px; }

.work { flex: 1; display: flex; flex-direction: column; min-width: 0; }
.view { flex: 1; position: relative; background: linear-gradient(#959fac 0, #a9b2bc 17%, #bcc3cb 35%, #d2d6db 58%, #eceef0 79%, #fff 94%); overflow: hidden; }
.scene { position: absolute; left: 0; top: 0; width: 100%; height: 100%; }
.axis { font: 32px "Noto Sans", sans-serif; fill: #b81414; }
.cubetext { font: 22px "Noto Sans", sans-serif; fill: #222; }
.cubetext .z { font-weight: bold; fill: #1111c0; }
.cubetext .x { font-weight: bold; fill: #c01111; }

.selbar { position: absolute; left: 360px; top: 4px; width: 317px; height: 22px; border-radius: 11px; background: rgba(198, 205, 212, .65); display: flex; align-items: center; justify-content: space-between; padding: 0 13px 0 12px; color: #56626c; }
.selbar svg { width: 12px; height: 12px; }
.selbar svg.c { width: 6px; height: 6px; }
.selbar .auto { gap: 1px; }
.selbar .xyz { font-size: 8px; }
.selbar .dim { opacity: .22; }
.selbar .pick { gap: 3px; }
.selbar .hot { height: 22px; width: 14px; justify-content: center; background: #a3b7c8; border: 1px solid #86a5be; color: #95a8b7; }

.rail { position: absolute; right: 4px; top: 46px; height: 434px; display: flex; flex-direction: column; justify-content: space-between; }
.rail button { width: 23px; height: 23px; border-radius: 50%; border: 1px solid rgba(205, 222, 230, .7); background: rgba(236, 238, 240, .4); justify-content: center; }
.rail .s { background: linear-gradient(135deg, transparent 49%, rgba(180, 195, 205, .5) 50%, transparent 51%), rgba(236, 238, 240, .4); }
.rail svg { width: 12px; height: 12px; }
.rail .og { color: #ebc0a8; }

.planes { position: absolute; left: 2px; bottom: 92px; width: 66px; display: flex; flex-direction: column; gap: 3px; color: #a0a5a8; }
.planes div { display: flex; justify-content: space-between; }
.planes button { height: 14px; border: 1px solid #c8ccd0; border-radius: 7px; justify-content: center; }
.planes .add { width: 24px; gap: 4px; }
.planes .add svg:first-child { width: 9px; height: 9px; }
.planes .two { width: 16px; }
.planes .more { width: 14px; }
.planes .pl { justify-content: flex-start; padding: 0 4px 0 5px; gap: 4px; }
.planes .pl svg { margin-left: auto; }
.planes b { font-weight: 600; }
.spin { position: absolute; left: 2px; bottom: 6px; display: grid; grid-template-columns: 12px 32px; gap: 4px; }
.spin button { border: 1px solid #a7abae; background: #eceeef; border-radius: 6px; justify-content: center; }
.spin .v { width: 12px; height: 32px; grid-column: 1 / 3; }
.spin .r { width: 12px; height: 12px; }
.spin .h { width: 32px; height: 12px; }
.spin svg { width: 100%; height: 100%; }
.tip { position: absolute; left: 343px; top: 409px; padding: 0 4px 0 2px; background: #ffffe1; border: 1px solid #c8c8a0; color: #111; font-size: 10px; line-height: 12px; }
.scale { position: absolute; right: 15px; bottom: 7px; width: 65px; height: 16px; border: solid #222; border-width: 0 1px; text-align: center; font: bold 10px/9px "Liberation Serif", serif; color: #111; background: linear-gradient(#333, #333) 0 9px / 100% 1px no-repeat; }

.sheets { height: 19px; display: flex; border-top: 1px solid #999; }
.sheets .on { width: 50px; justify-content: center; font-weight: bold; color: #111; border: 1px solid #aaa; border-width: 0 1px 1px; height: 18px; padding-top: 2px; }
.sheets .plusb { padding: 0 5px; }
.sheets span { flex: 1; }
.sheets svg { width: 8px; height: 8px; margin-right: 3px; }

.status { height: 16px; background: #2b579a; color: #e8eff8; display: flex; justify-content: flex-end; align-items: center; padding-right: 2px; }
.cell { display: flex; align-items: center; }
.cell svg { margin-left: 3px; color: #6187bb; }
.sec { width: 79px; }
.sel { width: 115px; }
.num { width: 60px; }
.num span { width: 11px; }
.zed { width: 56px; }
.zed span { width: 13px; }
.d2 { width: 18px; }
.cp { width: 58px; }
.tp { width: 57px; }
.wc { width: 48px; }
.modes { display: flex; gap: 4px; }
.modes button { width: 15px; height: 16px; justify-content: center; }
.modes svg { width: 12px; height: 12px; }
.modes .on { background: #1464c0; }
.taskbar { height: 6px; background: linear-gradient(90deg, #fbe0d1, #fbe6cf 50%, #ecdcdf); }
.taskbar svg { width: 100%; height: 6px; }
```
